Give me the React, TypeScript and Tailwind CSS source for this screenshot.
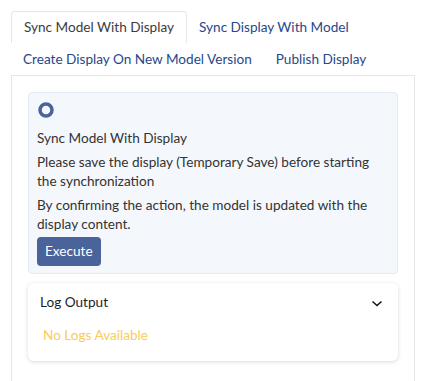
import React from 'react'

const tabs = [
  'Sync Model With Display',
  'Sync Display With Model',
  'Create Display On New Model Version',
  'Publish Display',
]

export default function App() {
  const active = 0

  return (
    <div className="min-h-[381px] w-[426px] bg-white px-[11px] pt-[11px] font-['Lato',sans-serif] text-[13.6px]">
      {/* Tabs */}
      <div className="flex flex-wrap">
        {tabs.map((t, i) => (
          <div
            key={t}
            className={
              i === active
                ? 'h-8 flex items-center px-3 rounded-t border border-b-0 border-[#e3e7ec] bg-white text-[#3c3c3c] -mb-px relative z-10'
                : 'h-8 flex items-center px-3 text-[#27488a]'
            }
          >
            {t}
          </div>
        ))}
      </div>

      {/* Panel */}
      <div className="border border-b-0 border-[#e3e7ec] p-4 min-h-[306px]">
        <div className="rounded border border-[#e6ebf1] bg-[#f4f8fd] px-2 pt-[9px] pb-[7px] text-[#333]">
          <svg width="16" height="16" viewBox="0 0 16 16" className="ml-px">
            <circle cx="8" cy="8" r="6" fill="none" stroke="#4a639b" strokeWidth="3.5" />
          </svg>
          <p className="mt-[11px] leading-[19px]">Sync Model With Display</p>
          <p className="mt-[5px] leading-[19px]">
            Please save the display (Temporary Save) before starting the synchronization
          </p>
          <p className="mt-[5px] leading-[19px]">
            By confirming the action, the model is updated with the display content.
          </p>
          <button className="mt-[3px] h-[29px] px-2 rounded-sm bg-[#4a639b] text-white">Execute</button>
        </div>

        <div className="mt-[9px] rounded-md bg-white shadow-[0_1px_4px_rgba(0,0,0,0.15)] px-3 pt-[10px] pb-[16px]">
          <div className="flex items-center justify-between">
            <span className="leading-[19px] text-[#1e1e1e]">Log Output</span>
            <svg width="12" height="12" viewBox="0 0 12 12" className="mr-[3px]">
              <path d="M1.5 4.5l4.5 4 4.5-4" fill="none" stroke="#111" strokeWidth="1.5" />
            </svg>
          </div>
          <p className="mt-[14px] ml-[3px] leading-[19px] text-[#fbcb5c]">No Logs Available</p>
        </div>
      </div>
    </div>
  )
}
